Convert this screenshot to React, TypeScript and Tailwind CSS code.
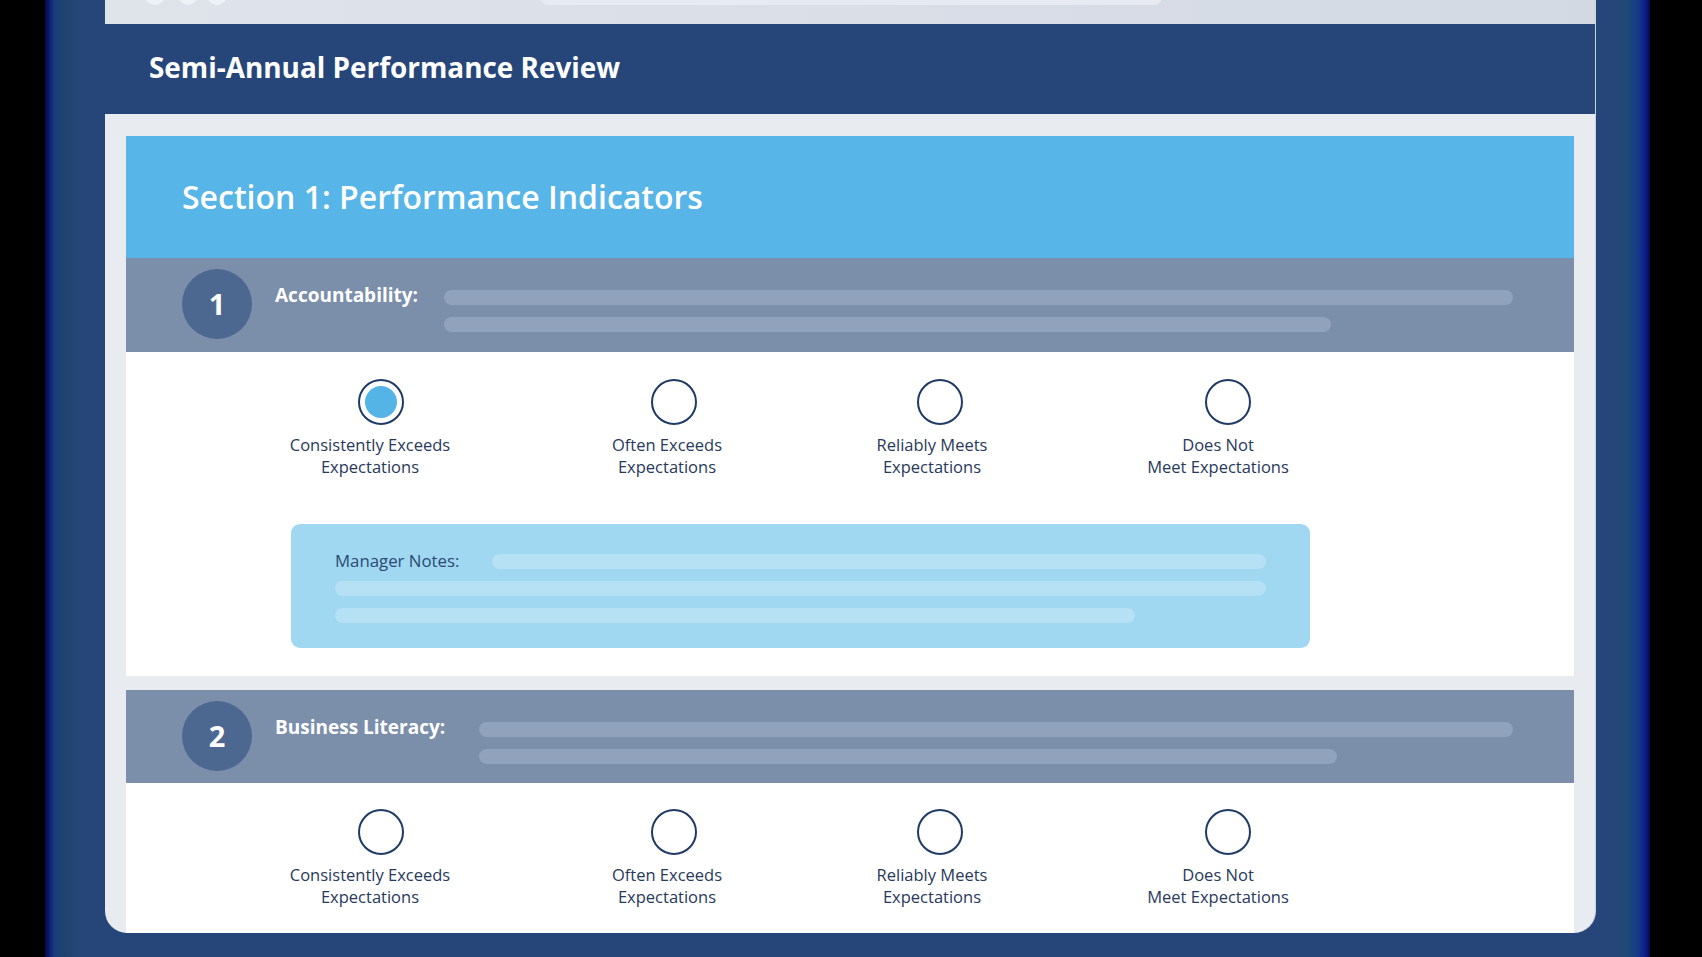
import React from 'react';

const options = [
  { id: 'ce', lines: ['Consistently Exceeds', 'Expectations'], gap: 'ml-0', shift: 'ml-[22px]' },
  { id: 'oe', lines: ['Often Exceeds', 'Expectations'], gap: 'ml-[97px]', shift: 'ml-[14px]' },
  { id: 'rm', lines: ['Reliably Meets', 'Expectations'], gap: 'ml-[65px]', shift: 'ml-[16px]' },
  { id: 'dn', lines: ['Does Not', 'Meet Expectations'], gap: 'ml-[86px]', shift: 'ml-[20px]' },
];

const items = [
  {
    n: 1,
    title: 'Accountability:',
    labelW: 'w-[169px]',
    line2: 'w-[887px]',
  },
  {
    n: 2,
    title: 'Business Literacy:',
    labelW: 'w-[204px]',
    line2: 'w-[858px]',
  },
];

function Radio({ checked }: { checked: boolean }) {
  return (
    <div className="w-[46px] h-[46px] rounded-full border-[2.5px] border-[#1f3a64] bg-white flex items-center justify-center">
      {checked && <div className="w-[32px] h-[32px] rounded-full bg-[#55b4e6]" />}
    </div>
  );
}

function ItemHeader({ item }: { item: (typeof items)[number] }) {
  return (
    <div className="h-[94px] bg-[#7b8eaa] flex items-start shrink-0">
      <div className="ml-[56px] mt-[11px] w-[70px] h-[70px] rounded-full bg-[#4c6891] flex items-center justify-center text-white text-[29px] font-bold">
        {item.n}
      </div>
      <div className={`ml-[23px] mt-[24px] ${item.labelW} text-white text-[19px] leading-[26px] font-bold`}>
        {item.title}
      </div>
      <div className="flex-1 mr-[61px] mt-[32px] flex flex-col gap-[12px]">
        <div className="h-[15px] w-full rounded-full bg-[#91a2bc]" />
        <div className={`h-[15px] ${item.line2} rounded-full bg-[#91a2bc]`} />
      </div>
    </div>
  );
}

function Options({ selected }: { selected: string }) {
  return (
    <div className="flex pl-[144px]">
      {options.map((o) => (
        <div key={o.id} className={`${o.gap} w-[200px] flex flex-col items-center`}>
          <div className={o.shift}>
            <Radio checked={o.id === selected} />
          </div>
          <div className="mt-[9px] text-center text-[16.5px] leading-[22px] font-medium text-[#28395b]">
            {o.lines.map((l) => (
              <div key={l}>{l}</div>
            ))}
          </div>
        </div>
      ))}
    </div>
  );
}

export default function App() {
  return (
    <div className="h-[957px] w-full bg-black flex overflow-hidden font-['Open_Sans',sans-serif]">
      <div className="ml-[45px] w-[1605px] h-full bg-[linear-gradient(90deg,#06073f_0px,#0b1a6e_4px,#163a80_9px,#1d4470_17px,#22436f_24px,#26467a_34px,#26467a_calc(100%_-_34px),#1f4a74_calc(100%_-_24px),#153a88_calc(100%_-_12px),#0b1d8c_calc(100%_-_5px),#060a50_100%)]">
        <div className="ml-[60px] w-[1491px] h-[933px] rounded-b-[22px] overflow-hidden bg-[#e8ecf1] flex flex-col border-r border-[#c9d2df]">
          {/* browser chrome */}
          <div className="h-[24px] shrink-0 bg-[linear-gradient(90deg,#dfe4eb,#d3d9e3)] flex items-start overflow-hidden">
            <div className="ml-[40px] -mt-[15px] w-[20px] h-[20px] rounded-full bg-[#eef1f5]" />
            <div className="ml-[13px] -mt-[15px] w-[20px] h-[20px] rounded-full bg-[#eef1f5]" />
            <div className="ml-[9px] -mt-[15px] w-[20px] h-[20px] rounded-full bg-[#eef1f5]" />
            <div className="ml-[313px] -mt-[15px] w-[622px] h-[20px] rounded-[8px] bg-[#e7eaf0]" />
          </div>

          {/* header */}
          <div className="h-[90px] shrink-0 bg-[#26467a] pl-[44px] pb-[3px] flex items-center">
            <h1 className="text-white text-[27.9px] font-bold">Semi-Annual Performance Review</h1>
          </div>

          {/* body */}
          <div className="flex-1 px-[21px] pt-[22px] flex flex-col">
            <div className="h-[122px] shrink-0 bg-[#57b5e8] pl-[56px] flex items-center">
              <h2 className="text-white text-[32px] font-semibold">Section 1: Performance Indicators</h2>
            </div>

            <ItemHeader item={items[0]} />
            <div className="h-[324px] shrink-0 bg-white pt-[27px] flex flex-col">
              <Options selected="ce" />
              <div className="ml-[165px] mt-[46px] w-[1019px] h-[124px] rounded-[9px] bg-[#a0d7f1] px-[44px] pt-[25px]">
                <div className="flex items-center">
                  <span className="text-[16.8px] leading-[24px] text-[#2a4a72] font-medium">Manager Notes:</span>
                  <div className="ml-[33px] flex-1 h-[15px] rounded-full bg-[#b6e0f4]" />
                </div>
                <div className="mt-[8px] h-[15px] w-full rounded-full bg-[#b6e0f4]" />
                <div className="mt-[12px] h-[15px] w-[800px] rounded-full bg-[#b6e0f4]" />
              </div>
            </div>

            <div className="h-[14px] shrink-0" />

            <div className="h-[93px] shrink-0 flex flex-col">
              <ItemHeader item={items[1]} />
            </div>
            <div className="flex-1 bg-white pt-[26px]">
              <Options selected="" />
            </div>
          </div>
        </div>
      </div>
    </div>
  );
}
